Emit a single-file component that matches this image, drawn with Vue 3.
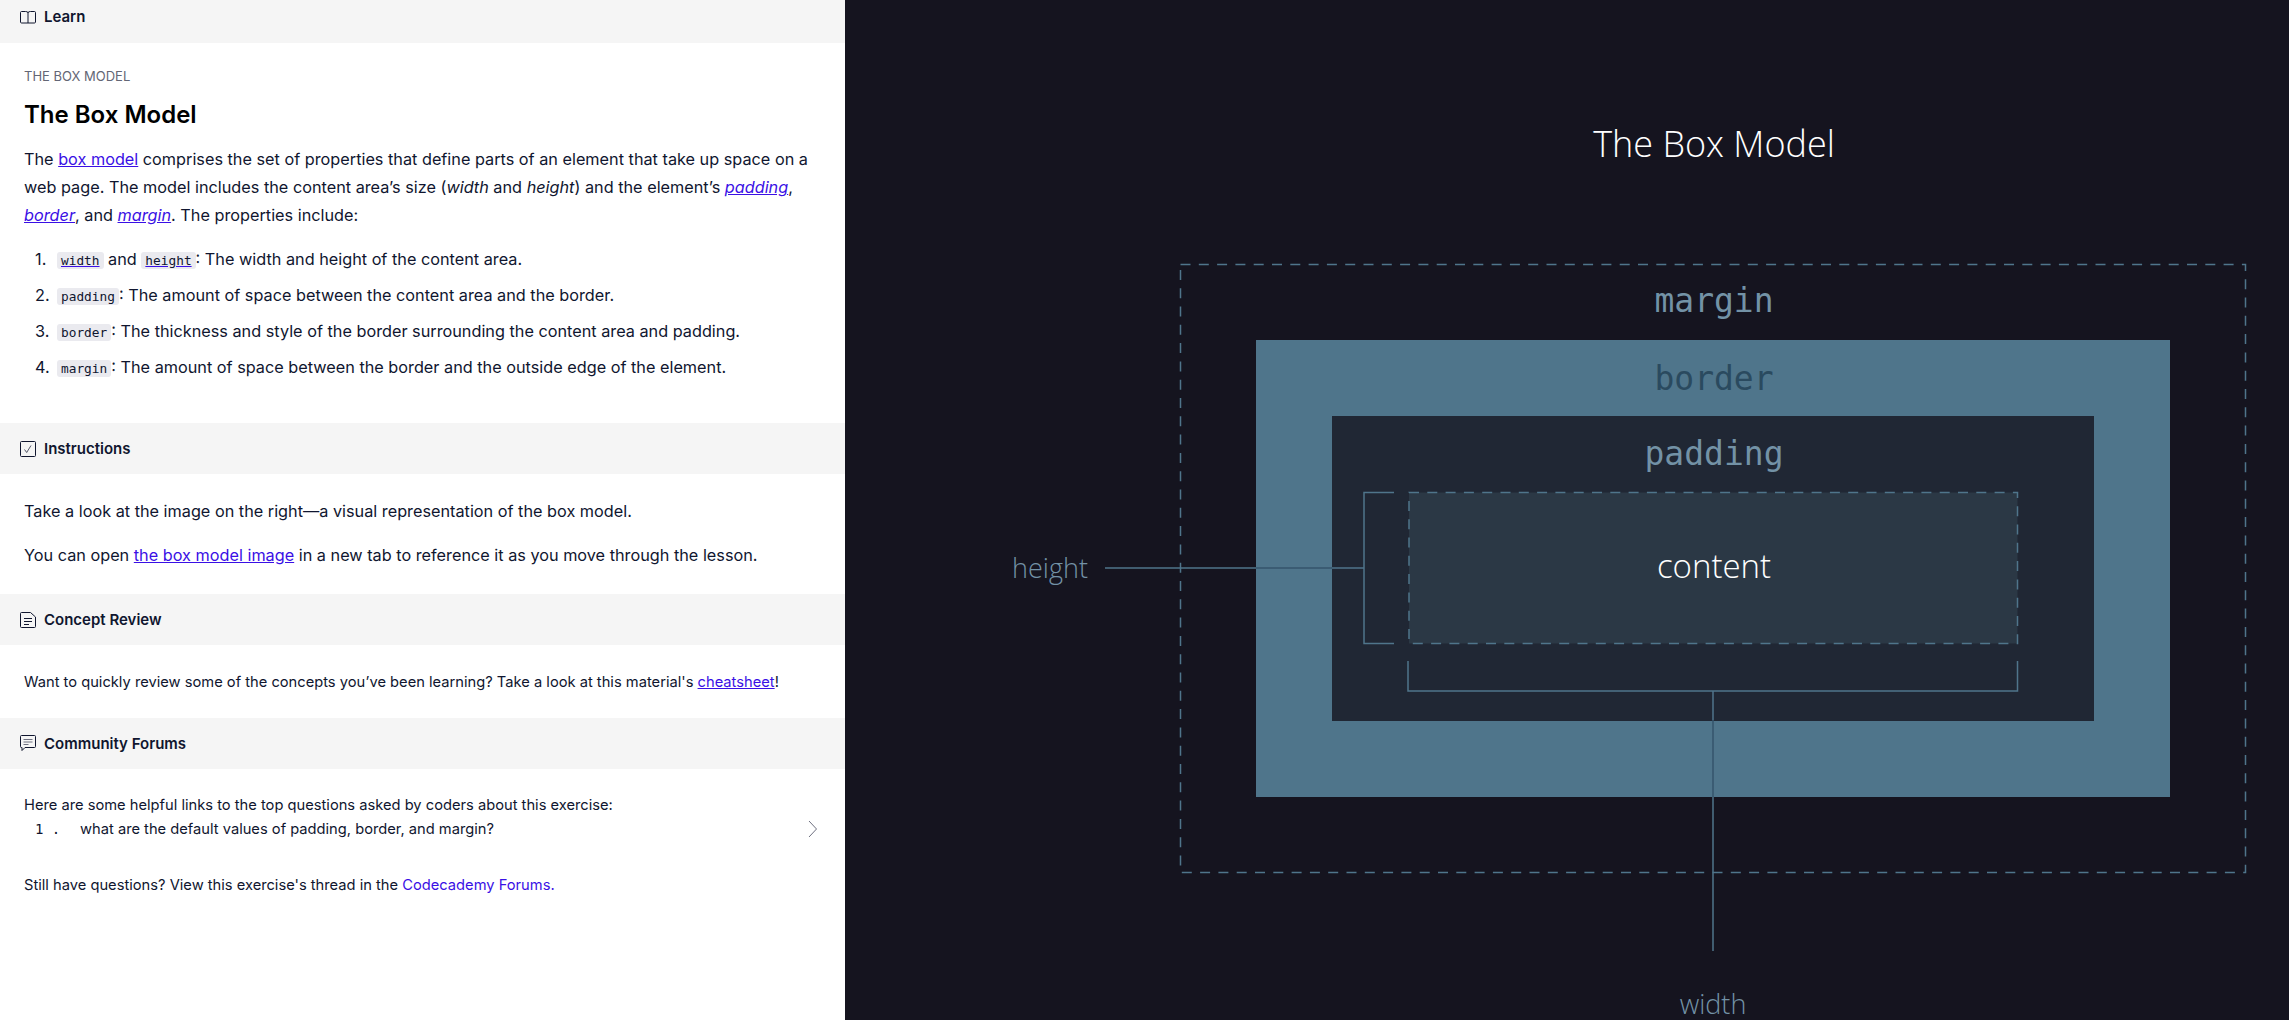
<script setup>
const items = [
  { code: "padding", text: ": The amount of space between the content area and the border." },
  { code: "border", text: ": The thickness and style of the border surrounding the content area and padding." },
  { code: "margin", text: ": The amount of space between the border and the outside edge of the element." },
];
</script>

<template>
  <div class="page">
    <div class="lesson">
      <div class="section-head learn-head">
        <svg class="head-icon" width="16" height="16" viewBox="0 0 16 16" fill="none" stroke="#10162f">
          <path d="M8 3v11M8 3.5C7.4 2.8 6.6 2.5 5.500 2.500H1.500c-.6 0-1 .4-1 1v9.500c0 .6.4 1 1 1H8h6.500c.6 0 1-.4 1-1V3.500c0-.6-.4-1-1-1h-4C9.400 2.500 8.600 2.800 8 3.500z" />
        </svg>
        <span>Learn</span>
      </div>
      <div class="learn-body">
        <div class="eyebrow">THE BOX MODEL</div>
        <h1>The Box Model</h1>
        <p class="intro">
          The <a href="#">box model</a> comprises the set of properties that define parts of an element that take up space on a
          web page. The model includes the content area’s size (<em>width</em> and <em>height</em>) and the element’s
          <a href="#"><em>padding</em></a>, <a href="#"><em>border</em></a>, and <a href="#"><em>margin</em></a>. The properties include:
        </p>
        <ol>
          <li><a href="#"><code>width</code></a> and <a href="#"><code>height</code></a>: The width and height of the content area.</li>
          <li v-for="item in items" :key="item.code"><code>{{ item.code }}</code>{{ item.text }}</li>
        </ol>
      </div>

      <div class="section-head">
        <svg class="head-icon" width="16" height="16" viewBox="0 0 16 16" fill="none" stroke="#10162f">
          <rect x="0.500" y="0.500" width="15" height="15" rx="1" />
          <path d="M4.500 8.500l2.200 3 4.300-7" stroke-width="0.700" />
        </svg>
        <span>Instructions</span>
      </div>
      <div class="instructions">
        <p>Take a look at the image on the right—a visual representation of the box model.</p>
        <p>You can open <a href="#">the box model image</a> in a new tab to reference it as you move through the lesson.</p>
      </div>

      <div class="section-head">
        <svg class="head-icon" width="16" height="16" viewBox="0 0 16 16" fill="none" stroke="#10162f">
          <path d="M1.500.5h9l5 4.500v9.500a1 1 0 0 1-1 1h-13a1 1 0 0 1-1-1v-13a1 1 0 0 1 1-1z" />
          <path d="M4 6.500h8M4 9.500h8M4 12.500h5" />
        </svg>
        <span>Concept Review</span>
      </div>
      <div class="small-body review">
        Want to quickly review some of the concepts you’ve been learning? Take a look at this material's <a href="#">cheatsheet</a>!
      </div>

      <div class="section-head">
        <svg class="head-icon" width="16" height="17" viewBox="0 0 16 17" fill="none" stroke="#10162f">
          <path d="M1.500.5h13a1 1 0 0 1 1 1v10a1 1 0 0 1-1 1H5l-3 3v-3h-.5a1 1 0 0 1-1-1v-10a1 1 0 0 1 1-1z" />
          <path d="M3.500 4.500h9M3.500 7h9M3.500 9.500h5" stroke="#6e7080" />
        </svg>
        <span>Community Forums</span>
      </div>
      <div class="small-body forums">
        <div>Here are some helpful links to the top questions asked by coders about this exercise:</div>
        <div class="question">
          <span class="q-num">1 .</span>
          <span class="q-text">what are the default values of padding, border, and margin?</span>
          <svg width="10" height="18" viewBox="0 0 10 18" fill="none" stroke="#6e7080">
            <path d="M1 1l7.500 8L1 17" />
          </svg>
        </div>
        <div class="still">Still have questions? View this exercise's thread in the <a class="plain" href="#">Codecademy Forums.</a></div>
      </div>
    </div>

    <div class="diagram">
      <svg width="1444" height="1020" viewBox="845 0 1444 1020">
        <text class="title" x="1714" y="157" text-anchor="middle">The Box Model</text>

        <rect x="1180.500" y="264.500" width="1065" height="608" fill="none" stroke="#4f758b" stroke-width="1.500" stroke-dasharray="10 8.300" />
        <rect x="1256" y="340" width="914" height="457" fill="#4f758b" />
        <rect x="1332" y="416" width="762" height="305" fill="#202734" />
        <rect x="1409" y="492.500" width="608.500" height="151" fill="#2b3845" stroke="#4f758b" stroke-width="1.500" stroke-dasharray="10 8.300" />

        <path d="M1394 492.500h-30v151h30M1408 661v30h609.500v-30" fill="none" stroke="#4f758b" stroke-width="1.500" />
        <path d="M1105 568h151" stroke="#4f758b" stroke-width="1.500" />
        <path d="M1256 568h76" stroke="#34556b" stroke-width="1.500" />
        <path d="M1332 568h32" stroke="#4f758b" stroke-width="1.500" />
        <path d="M1713 691v29" stroke="#4f758b" stroke-width="1.500" />
        <path d="M1713 720v77" stroke="#34556b" stroke-width="1.500" />
        <path d="M1713 797v154" stroke="#4f758b" stroke-width="1.500" />

        <text class="mono margin" x="1714" y="312" text-anchor="middle">margin</text>
        <text class="mono border" x="1714" y="390" text-anchor="middle">border</text>
        <text class="mono padding" x="1714" y="465" text-anchor="middle">padding</text>
        <text class="content" x="1714" y="578" text-anchor="middle">content</text>
        <text class="side" x="1050" y="578" text-anchor="middle">height</text>
        <text class="side" x="1713" y="1014" text-anchor="middle">width</text>
      </svg>
    </div>
  </div>
</template>

<style>
html, body {
  margin: 0;
  background: #15141f;
}
</style>

<style scoped>
.page {
  display: flex;
  height: 1020px;
  overflow: hidden;
  font-family: "Inter", "Noto Sans", sans-serif;
  color: #10162f;
}
.lesson {
  width: 845px;
  flex: none;
  background: #fff;
  font-size: 16.250px;
}
.section-head {
  height: 51px;
  background: #f5f5f5;
  display: flex;
  align-items: center;
  padding-left: 20px;
  gap: 8px;
  font-size: 15px;
  font-weight: 600;
}
.learn-head {
  height: 43px;
  padding-bottom: 10px;
  box-sizing: border-box;
}
.head-icon {
  flex: none;
}
.learn-body {
  padding: 24px 24px 0;
  height: 380px;
  box-sizing: border-box;
}
.eyebrow {
  font-size: 13px;
  line-height: 18px;
  color: #636675;
}
h1 {
  margin: 14px 0 0;
  font-size: 24px;
  line-height: 32px;
  font-weight: 600;
  color: #000;
}
.intro {
  margin: 14px 0 0;
  line-height: 28px;
}
ol {
  margin: 18px 0 0;
  padding-left: 11px;
  list-style: none;
  counter-reset: step;
}
li {
  line-height: 24px;
  margin-bottom: 12px;
  counter-increment: step;
}
li::before {
  content: counter(step) ".";
  display: inline-block;
  width: 22px;
}
a {
  color: #3a10e5;
  text-decoration: underline;
}
a.plain {
  text-decoration: none;
}
code {
  font-family: "DejaVu Sans Mono", monospace;
  font-size: 12.800px;
  line-height: 1;
  background: #eaeaef;
  border-radius: 3px;
  padding: 1px 4px;
  color: #10162f;
}
.instructions {
  height: 120px;
  padding: 25px 24px 0;
  box-sizing: border-box;
}
.instructions p {
  margin: 0 0 20px;
  line-height: 24px;
}
.small-body {
  font-size: 14.700px;
  padding: 0 24px;
  box-sizing: border-box;
}
.review {
  height: 73px;
  padding-top: 25px;
  line-height: 24px;
}
.forums {
  padding-top: 24px;
  line-height: 24px;
}
.question {
  display: flex;
  align-items: center;
}
.q-num {
  font-family: "DejaVu Sans Mono", monospace;
  font-size: 14px;
  width: 56px;
  padding-left: 11px;
  box-sizing: border-box;
  white-space: pre;
}
.q-text {
  flex: 1;
}
.question svg {
  flex: none;
  margin-right: 3px;
}
.still {
  margin-top: 32px;
}
.diagram {
  flex: 1;
  background: #15141f;
}
.diagram svg {
  display: block;
}
.title {
  font-family: "Open Sans", sans-serif;
  font-weight: 300;
  font-size: 36px;
  fill: #fff;
}
.mono {
  font-family: "DejaVu Sans Mono", monospace;
  font-size: 33px;
}
.margin {
  fill: #7392a6;
}
.border {
  fill: #2a4a5f;
}
.padding {
  fill: #7392a6;
}
.content {
  font-family: "Open Sans", sans-serif;
  font-weight: 300;
  font-size: 33px;
  fill: #fff;
}
.side {
  font-family: "Open Sans", sans-serif;
  font-weight: 300;
  font-size: 27px;
  fill: #7392a6;
}
</style>
